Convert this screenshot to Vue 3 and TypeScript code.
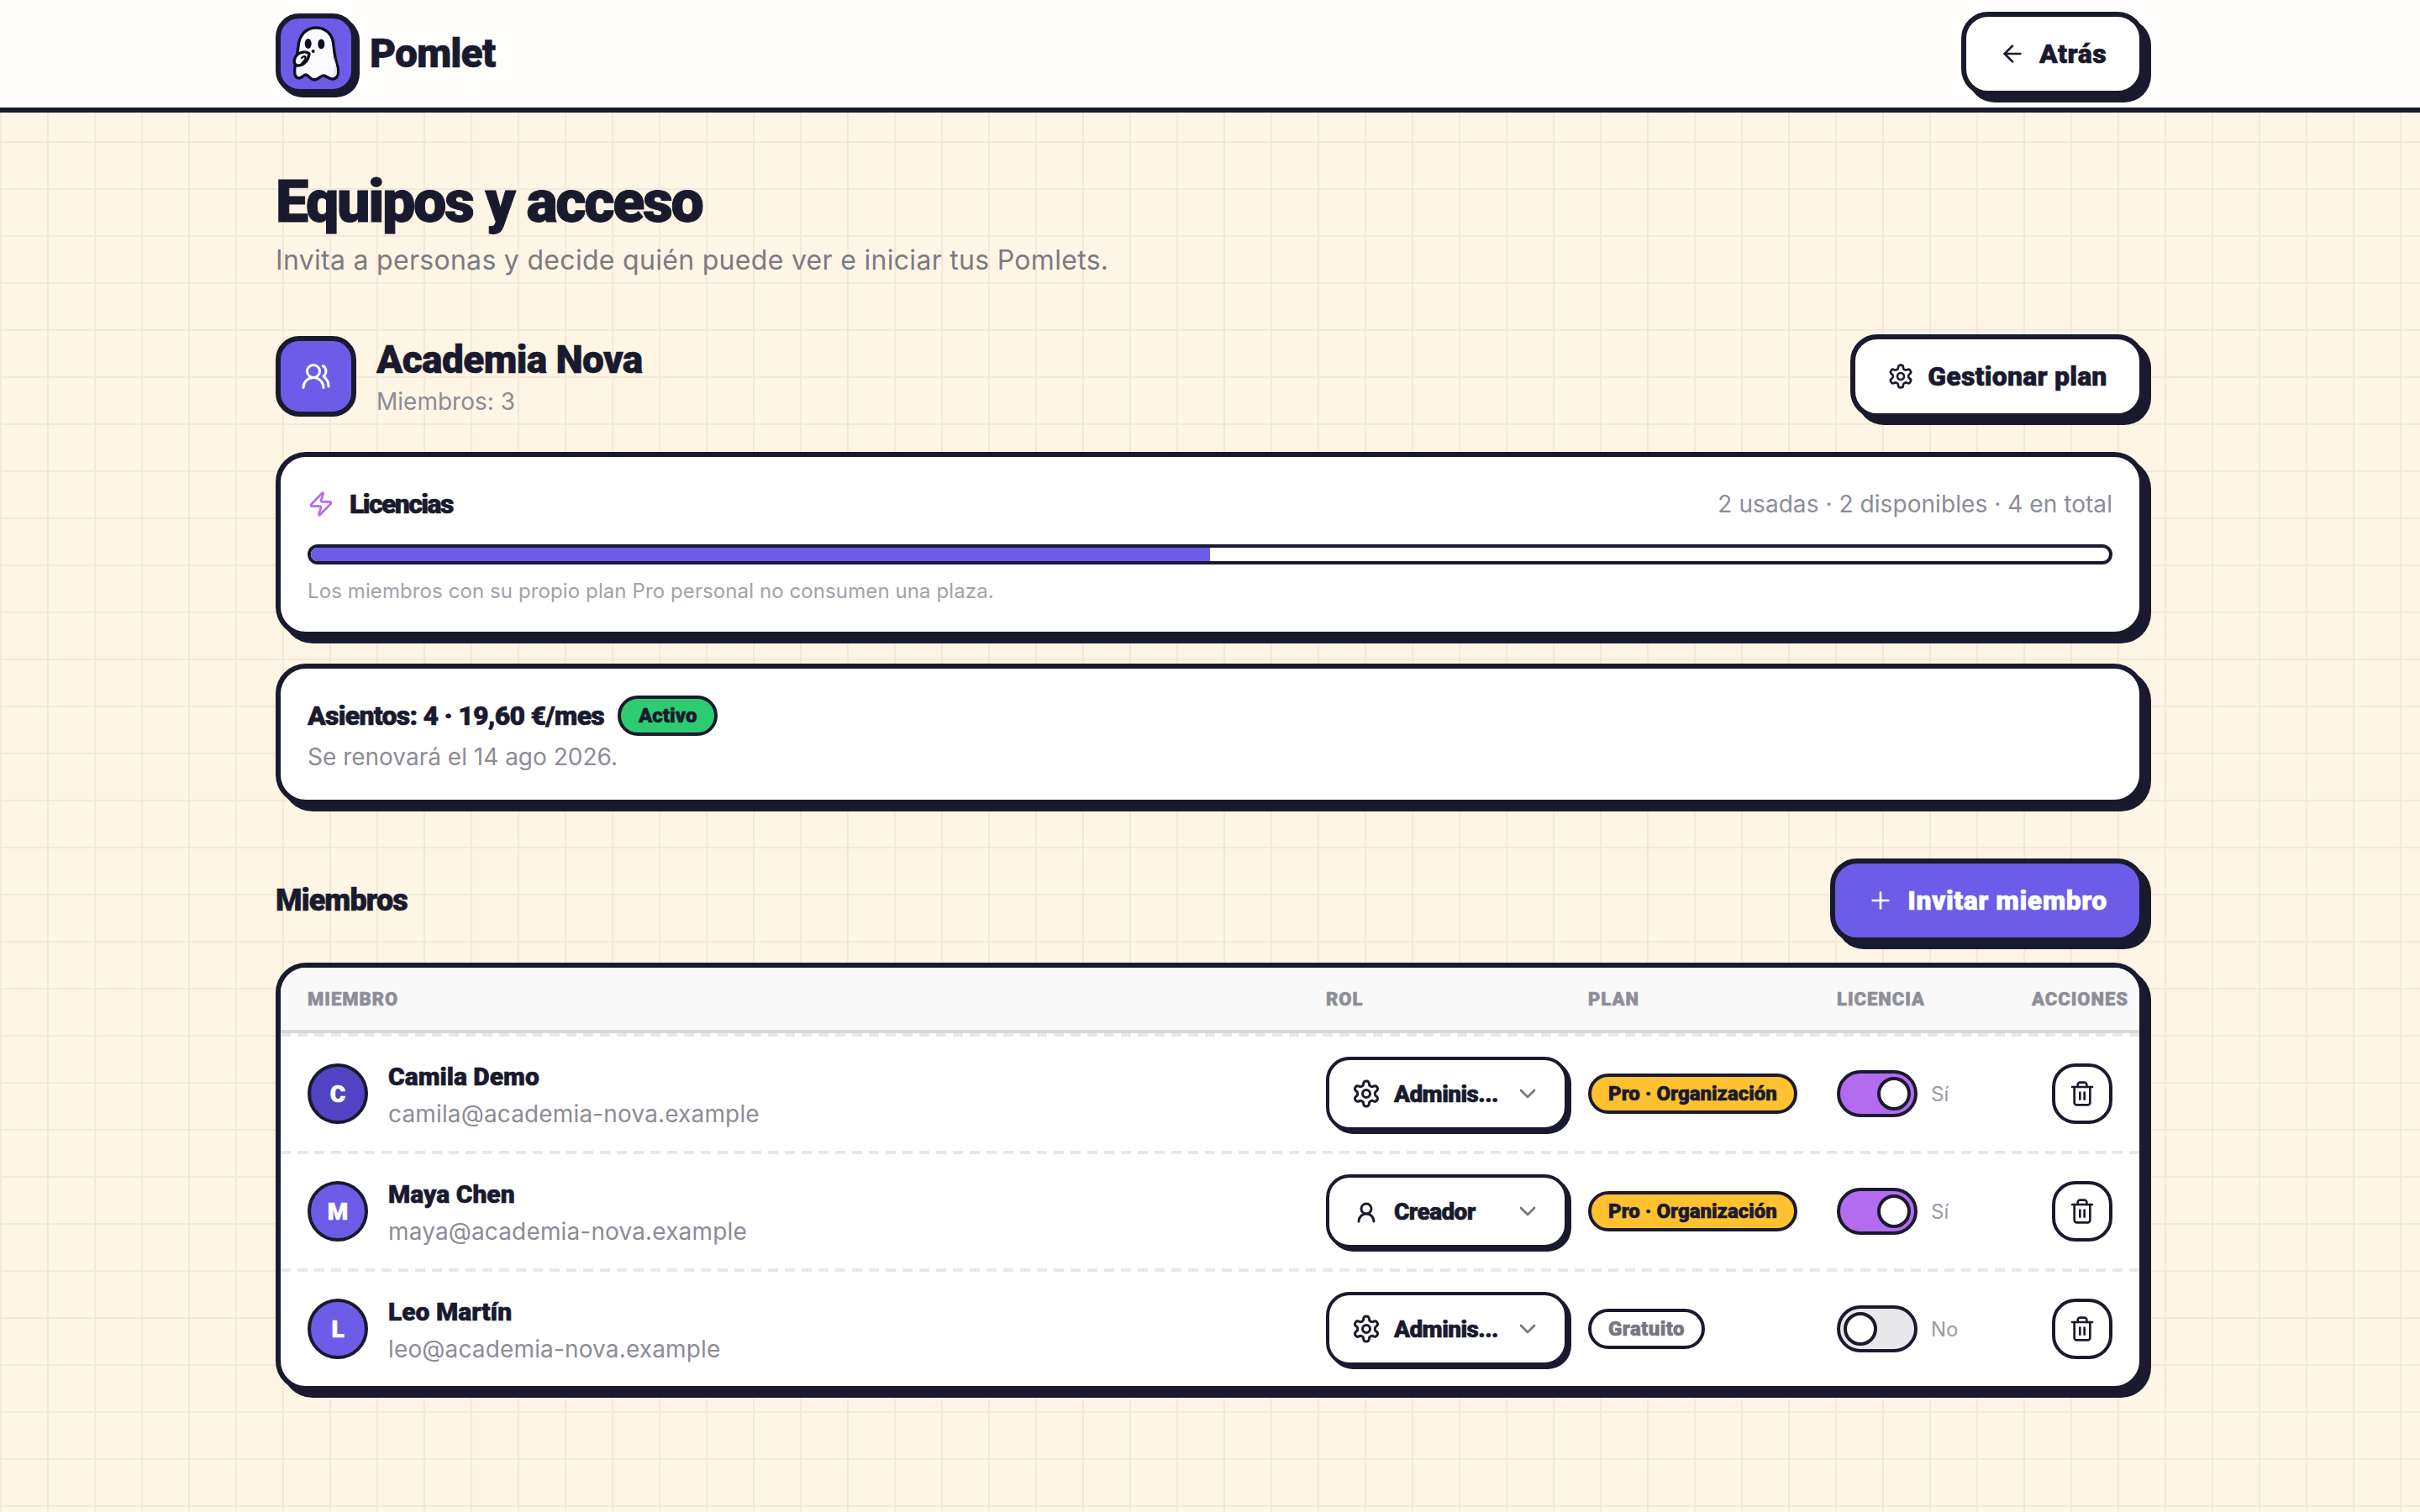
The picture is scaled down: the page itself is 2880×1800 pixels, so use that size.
<template>
  <div class="page">
    <header class="topbar">
      <div class="topbar-inner">
        <div class="brand">
          <div class="logo">
            <svg width="84" height="84" viewBox="0 0 84 84">
              <path class="ghost" d="M42 11C30 11 22 20 21 33L20 40L17 58C16 66 17 71 22 71C26 71 27 67 30 67C33 67 35 73 40 73C45 73 47 68 51 68C55 68 58 73 63 72C68 71 69 65 68 58C65 50 64 42 63 32C62 19 54 11 42 11Z" />
              <path d="M64 46C65 52 67 58 67 64C67 68 64 70 61 70C64 64 65 54 64 46Z" fill="#e6e4f5" />
              <path class="ghost" d="M34 42C30 38 20 40 17 47C15 52 17 57 22 56C28 55 33 50 34 42Z" />
              <path d="M25 47C28 44 31 45 29 49C28 51 26 52 25 54" fill="none" stroke="#0e1020" stroke-width="2.4" stroke-linecap="round" />
              <ellipse cx="32.7" cy="30" rx="4" ry="6" fill="#0e1020" />
              <ellipse cx="48.3" cy="30.5" rx="4" ry="6" fill="#0e1020" />
              <circle cx="38.7" cy="39" r="2" fill="#0e1020" />
            </svg>
          </div>
          <span class="brand-name">Pomlet</span>
        </div>
        <button class="btn btn-back">
          <svg class="icon" viewBox="0 0 24 24"><path d="m12 19-7-7 7-7" /><path d="M19 12H5" /></svg>
          <span>Atrás</span>
        </button>
      </div>
    </header>

    <main class="content">
      <h1 class="title">Equipos y acceso</h1>
      <p class="subtitle">Invita a personas y decide quién puede ver e iniciar tus Pomlets.</p>

      <section class="org-row">
        <div class="org-info">
          <div class="org-icon">
            <svg class="icon icon-lg icon-white" viewBox="0 0 24 24">
              <path d="M18 21a8 8 0 0 0-16 0" />
              <circle cx="10" cy="8" r="5" />
              <path d="M22 20c0-3.37-2-6.5-4-8a5 5 0 0 0-.45-8.3" />
            </svg>
          </div>
          <div class="org-text">
            <h2 class="org-name">Academia Nova</h2>
            <p class="org-count">Miembros: 3</p>
          </div>
        </div>
        <button class="btn btn-plan">
          <svg class="icon" viewBox="0 0 24 24"><path :d="gearPath" /><circle cx="12" cy="12" r="3" /></svg>
          <span>Gestionar plan</span>
        </button>
      </section>

      <section class="card card-licenses">
        <div class="license-head">
          <div class="license-label">
            <svg class="icon icon-zap" viewBox="0 0 24 24">
              <path d="M4 14a1 1 0 0 1-.78-1.63l9.9-10.2a.5.5 0 0 1 .86.46l-1.92 6.02A1 1 0 0 0 13 10h7a1 1 0 0 1 .78 1.63l-9.9 10.2a.5.5 0 0 1-.86-.46l1.92-6.02A1 1 0 0 0 11 14z" />
            </svg>
            <span>Licencias</span>
          </div>
          <span class="license-stats">2 usadas · 2 disponibles · 4 en total</span>
        </div>
        <div class="progress">
          <div class="progress-fill" :style="{ width: usedPercent + '%' }"></div>
        </div>
        <p class="license-note">Los miembros con su propio plan Pro personal no consumen una plaza.</p>
      </section>

      <section class="card card-seats">
        <div class="seats-line">
          <span class="seats-title">Asientos: 4 · 19,60 €/mes</span>
          <span class="badge badge-active">Activo</span>
        </div>
        <p class="seats-renew">Se renovará el 14 ago 2026.</p>
      </section>

      <div class="members-head">
        <h3 class="members-title">Miembros</h3>
        <button class="btn btn-invite">
          <svg class="icon" viewBox="0 0 24 24"><path d="M5 12h14" /><path d="M12 5v14" /></svg>
          <span>Invitar miembro</span>
        </button>
      </div>

      <section class="table-card">
        <div class="table-row table-header">
          <span>MIEMBRO</span>
          <span>ROL</span>
          <span>PLAN</span>
          <span>LICENCIA</span>
          <span>ACCIONES</span>
        </div>
        <div v-for="m in members" :key="m.email" class="table-row member-row">
          <div class="member">
            <div class="avatar" :class="{ 'avatar-dark': m.dark }">{{ m.name[0] }}</div>
            <div class="member-text">
              <span class="member-name">{{ m.name }}</span>
              <span class="member-email">{{ m.email }}</span>
            </div>
          </div>
          <div class="select">
            <svg v-if="m.admin" class="icon icon-lg" viewBox="0 0 24 24"><path :d="gearPath" /><circle cx="12" cy="12" r="3" /></svg>
            <svg v-else class="icon icon-lg" viewBox="0 0 24 24"><circle cx="12" cy="10" r="4" /><path d="M18 20a6 6 0 0 0-12 0" /></svg>
            <span class="select-text">{{ m.role }}</span>
            <svg class="icon icon-chevron" viewBox="0 0 24 24"><path d="m6 9 6 6 6-6" /></svg>
          </div>
          <div>
            <span class="badge" :class="m.pro ? 'badge-pro' : 'badge-free'">{{ m.plan }}</span>
          </div>
          <div class="license-cell">
            <div class="toggle" :class="{ 'toggle-on': m.license }"><div class="thumb"></div></div>
            <span class="toggle-label">{{ m.license ? 'Sí' : 'No' }}</span>
          </div>
          <button class="trash">
            <svg class="icon" viewBox="0 0 24 24">
              <path d="M3 6h18" />
              <path d="M19 6v14c0 1-1 2-2 2H7c-1 0-2-1-2-2V6" />
              <path d="M8 6V4c0-1 1-2 2-2h4c1 0 2 1 2 2v2" />
              <path d="M10 11v6" />
              <path d="M14 11v6" />
            </svg>
          </button>
        </div>
      </section>
    </main>
  </div>
</template>

<script setup lang="ts">
interface Member {
  name: string;
  email: string;
  role: string;
  admin: boolean;
  plan: string;
  pro: boolean;
  license: boolean;
  dark?: boolean;
}

const usedPercent = 50;

const gearPath =
  'M12.22 2h-.44a2 2 0 0 0-2 2v.18a2 2 0 0 1-1 1.73l-.43.25a2 2 0 0 1-2 0l-.15-.08a2 2 0 0 0-2.73.73l-.22.38a2 2 0 0 0 .73 2.73l.15.1a2 2 0 0 1 1 1.72v.51a2 2 0 0 1-1 1.74l-.15.09a2 2 0 0 0-.73 2.73l.22.38a2 2 0 0 0 2.73.73l.15-.08a2 2 0 0 1 2 0l.43.25a2 2 0 0 1 1 1.73V20a2 2 0 0 0 2 2h.44a2 2 0 0 0 2-2v-.18a2 2 0 0 1 1-1.73l.43-.25a2 2 0 0 1 2 0l.15.08a2 2 0 0 0 2.73-.73l.22-.39a2 2 0 0 0-.73-2.73l-.15-.08a2 2 0 0 1-1-1.74v-.5a2 2 0 0 1 1-1.74l.15-.09a2 2 0 0 0 .73-2.73l-.22-.38a2 2 0 0 0-2.73-.73l-.15.08a2 2 0 0 1-2 0l-.43-.25a2 2 0 0 1-1-1.73V4a2 2 0 0 0-2-2z';

const members: Member[] = [
  { name: 'Camila Demo', email: 'camila@academia-nova.example', role: 'Adminis...', admin: true, plan: 'Pro · Organización', pro: true, license: true, dark: true },
  { name: 'Maya Chen', email: 'maya@academia-nova.example', role: 'Creador', admin: false, plan: 'Pro · Organización', pro: true, license: true },
  { name: 'Leo Martín', email: 'leo@academia-nova.example', role: 'Adminis...', admin: true, plan: 'Gratuito', pro: false, license: false }
];
</script>

<style>
body {
  margin: 0;
  background-color: #fff5e4;
  background-image:
    linear-gradient(90deg, #f2e9da 2px, transparent 2px),
    linear-gradient(#f2e9da 2px, transparent 2px);
  background-size: 56px 56px;
}
</style>

<style scoped>
.page {
  min-height: 1800px;
  font-family: Inter, "Liberation Sans", sans-serif;
  color: #1a1a2e;
}

.topbar {
  height: 128px;
  background: #fffefc;
  border-bottom: 6px solid #1a1a2e;
}

.topbar-inner {
  width: 2224px;
  height: 128px;
  margin-left: 328px;
  display: flex;
  align-items: flex-start;
  justify-content: space-between;
}

.brand {
  display: flex;
  align-items: center;
  gap: 14px;
  margin-top: 16px;
}

.logo {
  width: 96px;
  height: 96px;
  box-sizing: border-box;
  border: 6px solid #1a1a2e;
  border-radius: 28px;
  background: #6c5ce7;
  box-shadow: 4px 4px 0 #1a1a2e;
  display: flex;
  align-items: center;
  justify-content: center;
}

.ghost {
  fill: #fbfbff;
  stroke: #0e1020;
  stroke-width: 3.4;
  stroke-linejoin: round;
}

.brand-name,
.title,
.org-name,
.btn,
.license-label,
.seats-title,
.badge,
.members-title,
.table-header,
.avatar,
.member-name,
.select-text {
  font-family: Roboto, "Open Sans", sans-serif;
  font-weight: 900;
  -webkit-text-stroke: 0.6px;
}

.brand-name {
  font-size: 48px;
  line-height: 1;
  letter-spacing: -1px;
  padding-left: 2px;
}

.icon {
  width: 32px;
  height: 32px;
  flex: none;
  fill: none;
  stroke: currentColor;
  stroke-width: 2;
  stroke-linecap: round;
  stroke-linejoin: round;
}

.icon-lg {
  width: 36px;
  height: 36px;
}

.icon-white {
  color: #fff;
}

.icon-zap {
  color: #b36bf0;
}

.icon-chevron {
  color: #77777f;
}

.btn {
  height: 100px;
  box-sizing: border-box;
  display: inline-flex;
  align-items: center;
  justify-content: center;
  gap: 16px;
  border: 6px solid #1a1a2e;
  border-radius: 32px;
  background: #fff;
  color: #1a1a2e;
  box-shadow: 8px 8px 0 #1a1a2e;
  font-size: 32px;
  padding: 0;
}

.btn-back {
  width: 218px;
  margin-top: 14px;
  letter-spacing: 0.5px;
}

.btn-plan {
  width: 350px;
  letter-spacing: 0.2px;
}

.btn-invite {
  width: 374px;
  background: #6c5ce7;
  color: #fff;
  letter-spacing: 0.5px;
}

.content {
  width: 2224px;
  margin-left: 328px;
}

.title {
  margin: 0;
  padding-top: 64px;
  font-size: 70px;
  line-height: 84px;
  letter-spacing: -2.4px;
  -webkit-text-stroke: 1px;
}

.subtitle {
  margin: 4px 0 0;
  font-size: 32px;
  line-height: 48px;
  letter-spacing: 0.3px;
  color: #7b7a84;
}

.org-row {
  display: flex;
  justify-content: space-between;
  align-items: flex-start;
  margin-top: 64px;
}

.org-info {
  display: flex;
  gap: 24px;
  margin-top: 2px;
}

.org-icon {
  width: 96px;
  height: 96px;
  box-sizing: border-box;
  border: 6px solid #1a1a2e;
  border-radius: 28px;
  background: #6c5ce7;
  display: flex;
  align-items: center;
  justify-content: center;
}

.org-name {
  margin: 0;
  font-size: 46px;
  line-height: 56px;
  letter-spacing: -0.6px;
}

.org-count {
  margin: 4px 0 0;
  font-size: 28px;
  line-height: 36px;
  color: #8c8c96;
}

.card {
  box-sizing: border-box;
  border: 6px solid #1a1a2e;
  border-radius: 36px;
  background: #fff;
  box-shadow: 8px 8px 0 #1a1a2e;
  padding: 0 32px;
}

.card-licenses {
  height: 220px;
  margin-top: 40px;
  padding-top: 32px;
}

.license-head {
  display: flex;
  justify-content: space-between;
  align-items: center;
  height: 48px;
}

.license-label {
  display: flex;
  align-items: center;
  gap: 18px;
  font-size: 32px;
  letter-spacing: -1.6px;
}

.license-stats {
  font-size: 28px;
  letter-spacing: 0.06px;
  color: #8c8c96;
}

.progress {
  height: 24px;
  box-sizing: border-box;
  margin-top: 24px;
  border: 4px solid #1a1a2e;
  border-radius: 12px;
  background: #fff;
  overflow: hidden;
}

.progress-fill {
  height: 100%;
  background: #6c5ce7;
}

.license-note {
  margin: 14px 0 0;
  font-size: 24px;
  line-height: 36px;
  letter-spacing: 0.1px;
  color: #a2a2aa;
}

.card-seats {
  height: 168px;
  margin-top: 32px;
  padding-top: 32px;
}

.seats-line {
  display: flex;
  align-items: center;
  gap: 16px;
  height: 48px;
}

.seats-title {
  font-size: 32px;
  letter-spacing: -0.75px;
}

.seats-renew {
  margin: 6px 0 0;
  font-size: 28px;
  line-height: 38px;
  color: #8c8c96;
}

.badge {
  display: inline-flex;
  align-items: center;
  height: 48px;
  box-sizing: border-box;
  border: 4px solid #1a1a2e;
  border-radius: 24px;
  padding: 0 20px;
  font-size: 24px;
  white-space: nowrap;
}

.badge-active {
  background: #2ecc71;
  padding: 0 21px;
}

.badge-pro {
  background: #ffc12f;
}

.badge-free {
  background: #fff;
  color: #77777f;
  letter-spacing: 0.4px;
}

.members-head {
  display: flex;
  justify-content: space-between;
  align-items: center;
  margin-top: 64px;
}

.members-title {
  margin: 0;
  font-size: 36px;
  letter-spacing: -0.9px;
}

.table-card {
  box-sizing: border-box;
  margin-top: 24px;
  border: 6px solid #1a1a2e;
  border-radius: 36px;
  background: #fff;
  box-shadow: 8px 8px 0 #1a1a2e;
  overflow: hidden;
}

.table-row {
  display: grid;
  grid-template-columns: 1212px 312px 296px 232px 96px;
  align-items: center;
  padding: 0 32px;
}

.table-header {
  height: 74px;
  background: #f9f9f9;
  border-bottom: 4px solid #d8d8dc;
  font-size: 22px;
  letter-spacing: 1px;
  color: #8e8e98;
  white-space: nowrap;
}

.member-row {
  height: 136px;
  padding-top: 4px;
  background-image: repeating-linear-gradient(90deg, #e8e8ea 0 12px, transparent 12px 20px);
  background-size: 100% 4px;
  background-repeat: no-repeat;
}

.member {
  display: flex;
  align-items: center;
  gap: 24px;
}

.avatar {
  width: 72px;
  height: 72px;
  box-sizing: border-box;
  border: 4px solid #1a1a2e;
  border-radius: 50%;
  background: #6c5ce7;
  color: #fff;
  font-size: 28px;
  display: flex;
  align-items: center;
  justify-content: center;
}

.avatar-dark {
  background: #5243c2;
}

.member-text {
  display: flex;
  flex-direction: column;
  gap: 6px;
  padding-top: 4px;
}

.member-name {
  font-size: 30px;
  line-height: 38px;
}

.member-email {
  font-size: 28px;
  line-height: 38px;
  letter-spacing: 0.15px;
  color: #8c8c96;
}

.select {
  width: 288px;
  height: 88px;
  box-sizing: border-box;
  border: 4px solid #1a1a2e;
  border-radius: 28px;
  box-shadow: 4px 4px 0 #1a1a2e;
  background: #fff;
  display: flex;
  align-items: center;
  gap: 15px;
  padding: 0 28px 0 26px;
}

.select-text {
  flex: 1;
  font-size: 28px;
  letter-spacing: -0.6px;
}

.license-cell {
  display: flex;
  align-items: center;
  gap: 16px;
}

.toggle {
  width: 96px;
  height: 56px;
  box-sizing: border-box;
  border: 4px solid #1a1a2e;
  border-radius: 28px;
  background: #e8e8ea;
  padding: 4px;
  display: flex;
}

.toggle-on {
  background: #b36bf0;
  justify-content: flex-end;
}

.thumb {
  width: 40px;
  height: 40px;
  box-sizing: border-box;
  border: 4px solid #1a1a2e;
  border-radius: 50%;
  background: #fff;
}

.toggle-label {
  font-size: 24px;
  color: #9a9aa2;
}

.trash {
  width: 72px;
  height: 72px;
  box-sizing: border-box;
  margin-left: 24px;
  border: 4px solid #1a1a2e;
  border-radius: 28px;
  background: #fff;
  color: #1a1a2e;
  display: flex;
  align-items: center;
  justify-content: center;
  padding: 0;
}
</style>
